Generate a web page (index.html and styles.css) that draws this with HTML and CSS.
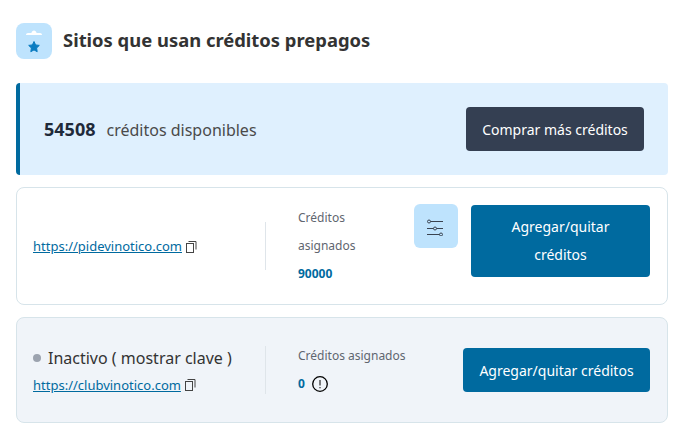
FILE: index.html
```html
<!DOCTYPE html>
<html lang="es">
<head>
    <meta charset="UTF-8">
    <title>Sitios que usan créditos prepagos</title>
    <link rel="stylesheet" href="styles.css">
</head>
<body>
    <div class="page">
        <div class="title-row">
            <div class="title-icon">
                <svg width="36" height="36" viewBox="0 0 36 36">
                    <path d="M10 12c0-1.300.8-2 2-2h3.400c.3-1.600 1.300-2.500 2.600-2.500s2.300.9 2.600 2.500H24c1.200 0 2 .7 2 2z" fill="#fff"/>
                    <path d="M18 18.500l1.600 3.400 3.700.5-2.700 2.600.6 3.700-3.200-1.800-3.200 1.800.6-3.700-2.700-2.600 3.700-.5z" fill="#0a7cc1" stroke="#0a7cc1" stroke-linejoin="round"/>
                </svg>
            </div>
            <h1>Sitios que usan créditos prepagos</h1>
        </div>

        <div class="balance">
            <div class="balance-text"><strong>54508</strong><span>créditos disponibles</span></div>
            <button class="btn btn-dark">Comprar más créditos</button>
        </div>

        <div class="card card-active">
            <div class="site">
                <div class="site-link">
                    <a href="#">https://pidevinotico.com</a>
                    <svg class="copy" width="12" height="13" viewBox="0 0 12 13" fill="none" stroke="#444">
                        <rect x=".5" y="3.500" width="7" height="9"/>
                        <path d="M2.500 1.500h7.500v8"/>
                    </svg>
                </div>
            </div>
            <div class="credits credits-narrow">
                <p>Créditos asignados</p>
                <b>90000</b>
            </div>
            <div class="settings">
                <svg width="20" height="20" viewBox="0 0 20 20" fill="none" stroke="#3a4350">
                    <path d="M4.500 5.500H17M1 12.500h6.500M10.500 12.500H17M1 18.500h12.500"/>
                    <circle cx="3" cy="5.500" r="1.500"/>
                    <circle cx="9" cy="12.500" r="1.500"/>
                    <circle cx="15" cy="18.500" r="1.500"/>
                </svg>
            </div>
            <button class="btn btn-blue btn-tall">Agregar/quitar créditos</button>
        </div>

        <div class="card card-inactive">
            <div class="site">
                <div class="status"><i></i>Inactivo ( mostrar clave )</div>
                <div class="site-link">
                    <a href="#">https://clubvinotico.com</a>
                    <svg class="copy" width="12" height="13" viewBox="0 0 12 13" fill="none" stroke="#444">
                        <rect x=".5" y="3.500" width="7" height="9"/>
                        <path d="M2.500 1.500h7.500v8"/>
                    </svg>
                </div>
            </div>
            <div class="credits">
                <p>Créditos asignados</p>
                <div class="credits-zero">
                    <b>0</b>
                    <svg width="16" height="16" viewBox="0 0 16 16" fill="none" stroke="#000">
                        <circle cx="8" cy="8" r="7.300" stroke-width="1.300"/>
                        <path d="M8 4v5.500M8 11v1.300"/>
                    </svg>
                </div>
            </div>
            <button class="btn btn-blue btn-wide">Agregar/quitar créditos</button>
        </div>
    </div>
</body>
</html>
```

FILE: styles.css
```css
*{
    margin: 0;
    padding: 0;
    box-sizing: border-box;
}
body{
    background-color: #fff;
    font-family: "Noto Sans", sans-serif;
    color: #333;
}
.page{
    width: 652px;
    margin-left: 16px;
    padding-top: 23px;
}
.title-row{
    display: flex;
    align-items: center;
    gap: 11px;
    margin-bottom: 24px;
}
.title-icon{
    width: 36px;
    height: 36px;
    background-color: #bee3fd;
    border-radius: 8px;
}
.title-icon svg{
    display: block;
}
h1{
    font-size: 18.4px;
    font-weight: 700;
    color: #333;
    padding-bottom: 3px;
}
.balance{
    height: 92px;
    display: flex;
    align-items: center;
    justify-content: space-between;
    padding: 0 24px;
    background-color: #dff0fe;
    border-left: 4px solid #006a9f;
    border-radius: 4px;
    margin-bottom: 12px;
}
.balance-text strong{
    font-size: 18px;
    font-weight: 700;
    color: #1f2a3a;
    margin-right: 11px;
}
.balance-text span{
    font-size: 16px;
    color: #4a4a4a;
}
.btn{
    border: none;
    border-radius: 4px;
    color: #fff;
    font-family: inherit;
    font-size: 14px;
    font-weight: 400;
}
.btn-dark{
    width: 178px;
    height: 44px;
    background-color: #343f52;
}
.btn-blue{
    background-color: #006a9f;
}
.btn-tall{
    width: 179px;
    height: 72px;
    line-height: 28px;
    padding: 0 30px;
    margin-left: 13px;
}
.btn-wide{
    width: 187px;
    height: 44px;
    margin-left: auto;
}
.card{
    display: flex;
    border: 1px solid #d7e4ea;
    border-radius: 8px;
    padding: 0 17px 0 16px;
}
.card-active{
    height: 118px;
    background-color: #fff;
    align-items: flex-start;
    margin-bottom: 12px;
}
.card-inactive{
    height: 106px;
    background-color: #f0f4f9;
    align-items: center;
}
.site{
    width: 233px;
    border-right: 1px solid #dfe5ea;
    height: 48px;
    display: flex;
    flex-direction: column;
    justify-content: center;
}
.card-active .site{
    margin-top: 34px;
}
.site-link{
    display: flex;
    align-items: center;
    gap: 4px;
    font-size: 13px;
}
.site-link a{
    color: #006a9f;
}
.status{
    display: flex;
    align-items: center;
    gap: 7px;
    font-size: 16px;
    color: #333;
    margin-bottom: 7px;
}
.status i{
    width: 8px;
    height: 8px;
    border-radius: 50%;
    background-color: #9ca3af;
}
.credits{
    margin-left: 32px;
    font-size: 12px;
    color: #5f6670;
}
.credits p{
    line-height: 28px;
}
.credits b{
    color: #006a9f;
    font-size: 12px;
    line-height: 28px;
}
.credits-narrow{
    width: 84px;
    margin-top: 16px;
}
.credits-zero{
    display: flex;
    align-items: center;
    gap: 7px;
}
.settings{
    width: 44px;
    height: 44px;
    margin-top: 16px;
    margin-left: auto;
    background-color: #bee3fd;
    border-radius: 6px;
    display: flex;
    align-items: center;
    justify-content: center;
}
.card-active .btn-tall{
    margin-top: 17px;
}
```
